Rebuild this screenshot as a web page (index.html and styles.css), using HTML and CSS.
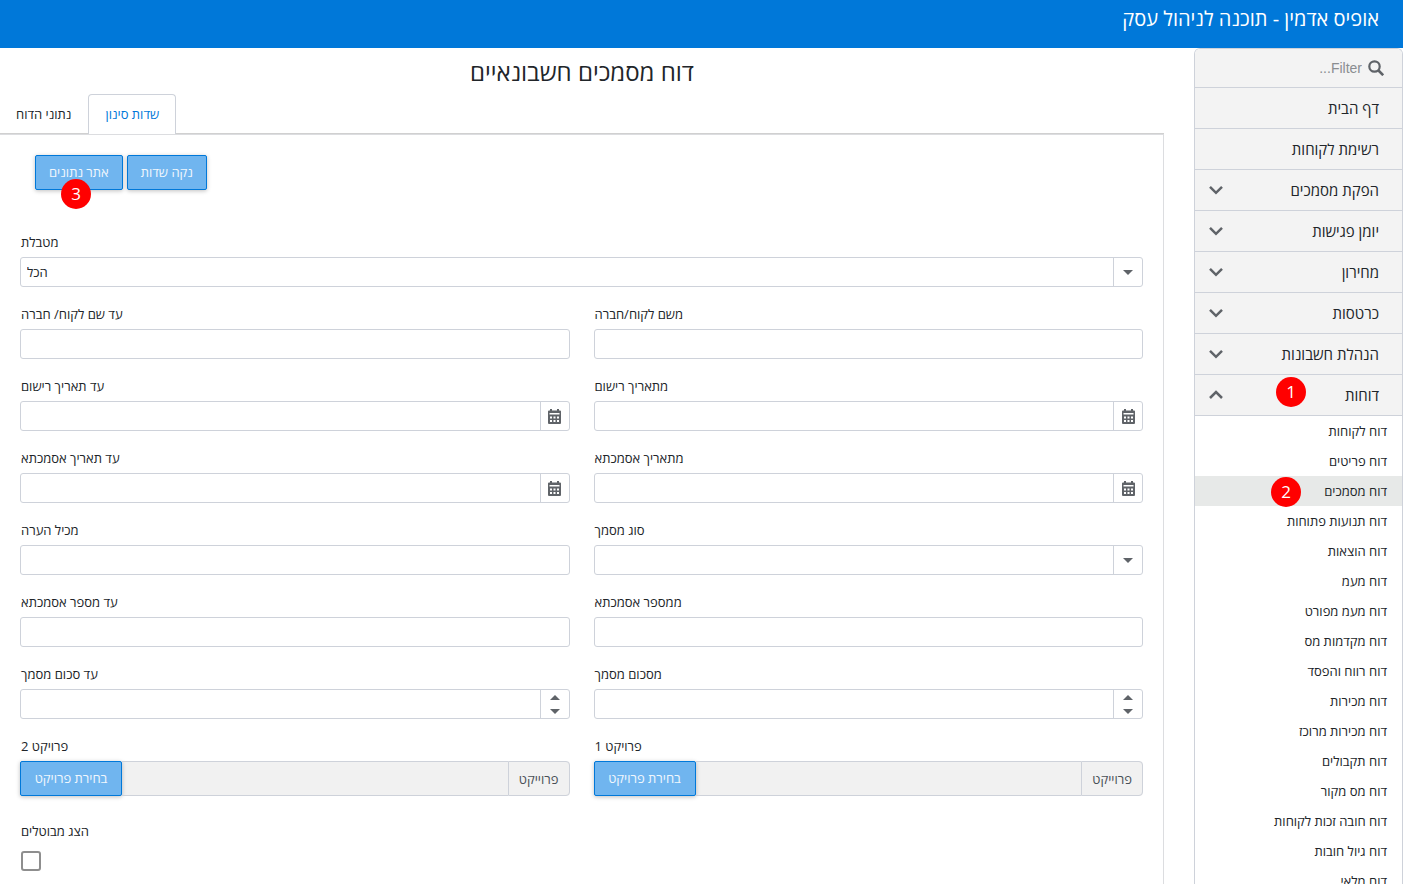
FILE: index.html
```html
<!DOCTYPE html>
<html lang="he">
<head>
<meta charset="utf-8">
<title>אופיס אדמין - תוכנה לניהול עסק</title>
<link rel="stylesheet" href="styles.css">
</head>
<body>
<svg class="sprite" aria-hidden="true">
  <symbol id="i-down" viewBox="0 0 16 16"><path d="M2 4.800 8 10.800 14 4.800" fill="none" stroke="currentColor" stroke-width="2.500"/></symbol>
  <symbol id="i-up" viewBox="0 0 16 16"><path d="M2 11 8 5 14 11" fill="none" stroke="currentColor" stroke-width="2.500"/></symbol>
  <symbol id="i-search" viewBox="0 0 16 16"><circle cx="6.500" cy="6.500" r="5.200" fill="none" stroke="currentColor" stroke-width="2.200"/><path d="M10 10 15.200 15.200" stroke="currentColor" stroke-width="2.600"/></symbol>
  <symbol id="i-caret" viewBox="0 0 10 5"><path d="M0 0h10L5 5z" fill="currentColor"/></symbol>
  <symbol id="i-caret-up" viewBox="0 0 10 5"><path d="M0 5h10L5 0z" fill="currentColor"/></symbol>
  <symbol id="i-cal" viewBox="0 0 13 15"><path fill="currentColor" fill-rule="evenodd" d="M2 0h2v1.500h5V0h2v1.500h1a1 1 0 0 1 1 1V14a1 1 0 0 1-1 1H1a1 1 0 0 1-1-1V2.500a1 1 0 0 1 1-1h1zM1.500 4v1.500h10V4zM2 7.500v2h2v-2zm3.500 0v2h2v-2zm3.500 0v2h2v-2zM2 11v2h2v-2zm3.500 0v2h2v-2zm3.500 0v2h2v-2z"/></symbol>
</svg>
<div class="app">
  <header class="topbar" dir="rtl">אופיס אדמין - תוכנה לניהול עסק</header>
  <div class="layout">
    <main class="content">
      <h1 class="title" dir="rtl">דוח מסמכים חשבונאיים</h1>
      <div class="tabs" role="tablist">
        <button class="tab" role="tab" aria-selected="false" type="button">נתוני הדוח</button>
        <button class="tab tab-active" role="tab" aria-selected="true" type="button">שדות סינון</button>
      </div>
      <form class="panel">
        <div class="toolbar">
          <div class="marked"><button class="btn" type="button">אתר נתונים</button><span class="badge badge-below">3</span></div>
          <button class="btn" type="button">נקה שדות</button>
        </div>
        <div class="fields">
          <div class="field field-wide"><label for="table">מטבלת</label>
            <div class="control"><select id="table"><option>הכל</option></select><span class="addon"><svg class="caret"><use href="#i-caret"/></svg></span></div></div>

          <div class="field"><label for="name-to">עד שם לקוח/ חברה</label><div class="control"><input id="name-to" type="text"></div></div>
          <div class="field"><label for="name-from">משם לקוח/חברה</label><div class="control"><input id="name-from" type="text"></div></div>

          <div class="field"><label for="reg-to">עד תאריך רישום</label><div class="control"><input id="reg-to" type="text"><button class="addon" type="button" aria-label="לוח שנה"><svg class="cal"><use href="#i-cal"/></svg></button></div></div>
          <div class="field"><label for="reg-from">מתאריך רישום</label><div class="control"><input id="reg-from" type="text"><button class="addon" type="button" aria-label="לוח שנה"><svg class="cal"><use href="#i-cal"/></svg></button></div></div>

          <div class="field"><label for="ref-to">עד תאריך אסמכתא</label><div class="control"><input id="ref-to" type="text"><button class="addon" type="button" aria-label="לוח שנה"><svg class="cal"><use href="#i-cal"/></svg></button></div></div>
          <div class="field"><label for="ref-from">מתאריך אסמכתא</label><div class="control"><input id="ref-from" type="text"><button class="addon" type="button" aria-label="לוח שנה"><svg class="cal"><use href="#i-cal"/></svg></button></div></div>

          <div class="field"><label for="note">מכיל הערה</label><div class="control"><input id="note" type="text"></div></div>
          <div class="field"><label for="doc-type">סוג מסמך</label><div class="control"><select id="doc-type"><option></option></select><span class="addon"><svg class="caret"><use href="#i-caret"/></svg></span></div></div>

          <div class="field"><label for="num-to">עד מספר אסמכתא</label><div class="control"><input id="num-to" type="text"></div></div>
          <div class="field"><label for="num-from">ממספר אסמכתא</label><div class="control"><input id="num-from" type="text"></div></div>

          <div class="field"><label for="sum-to">עד סכום מסמך</label><div class="control"><input id="sum-to" type="text" inputmode="decimal"><div class="addon spin"><button type="button" aria-label="הגדל"><svg class="caret"><use href="#i-caret-up"/></svg></button><button type="button" aria-label="הקטן"><svg class="caret"><use href="#i-caret"/></svg></button></div></div></div>
          <div class="field"><label for="sum-from">מסכום מסמך</label><div class="control"><input id="sum-from" type="text" inputmode="decimal"><div class="addon spin"><button type="button" aria-label="הגדל"><svg class="caret"><use href="#i-caret-up"/></svg></button><button type="button" aria-label="הקטן"><svg class="caret"><use href="#i-caret"/></svg></button></div></div></div>

          <div class="field"><label for="project-2" dir="rtl">פרויקט 2</label><div class="picker"><button class="btn" type="button">בחירת פרויקט</button><input id="project-2" type="text" readonly><span class="picker-tag">פרוייקט</span></div></div>
          <div class="field"><label for="project-1" dir="rtl">פרויקט 1</label><div class="picker"><button class="btn" type="button">בחירת פרויקט</button><input id="project-1" type="text" readonly><span class="picker-tag">פרוייקט</span></div></div>
        </div>
        <div class="check-field"><label for="cancelled">הצג מבוטלים</label><input class="check" id="cancelled" type="checkbox"></div>
      </form>
    </main>
    <nav class="sidebar" dir="rtl">
      <label class="filter"><svg class="icon"><use href="#i-search"/></svg><input type="text" placeholder="Filter..." aria-label="Filter"></label>
      <a class="item" href="#">דף הבית</a>
      <a class="item" href="#">רשימת לקוחות</a>
      <a class="item" href="#">הפקת מסמכים<svg class="icon"><use href="#i-down"/></svg></a>
      <a class="item" href="#">יומן פגישות<svg class="icon"><use href="#i-down"/></svg></a>
      <a class="item" href="#">מחירון<svg class="icon"><use href="#i-down"/></svg></a>
      <a class="item" href="#">כרטסות<svg class="icon"><use href="#i-down"/></svg></a>
      <a class="item" href="#">הנהלת חשבונות<svg class="icon"><use href="#i-down"/></svg></a>
      <a class="item" href="#">דוחות<svg class="icon"><use href="#i-up"/></svg><span class="badge badge-item">1</span></a>
      <div class="submenu">
        <a href="#">דוח לקוחות</a>
        <a href="#">דוח פריטים</a>
        <a class="current" href="#">דוח מסמכים<span class="badge badge-sub">2</span></a>
        <a href="#">דוח תנועות פתוחות</a>
        <a href="#">דוח הוצאות</a>
        <a href="#">דוח מעמ</a>
        <a href="#">דוח מעמ מפורט</a>
        <a href="#">דוח מקדמות מס</a>
        <a href="#">דוח רווח והפסד</a>
        <a href="#">דוח מכירות</a>
        <a href="#">דוח מכירות מרוכז</a>
        <a href="#">דוח תקבולים</a>
        <a href="#">דוח מס מקור</a>
        <a href="#">דוח חובה זכות לקוחות</a>
        <a href="#">דוח גיול חובות</a>
        <a href="#">דוח מלאי</a>
      </div>
    </nav>
  </div>
</div>
</body>
</html>
```
FILE: styles.css
```css
:root {
  --blue: #0078d9;
  --line: #ced2da;
  --ink: #212529;
  --icon: #5f6368;
  --grey: #f3f3f3;
}
* { box-sizing: border-box; }
body {
  margin: 0;
  background: #fff;
  color: var(--ink);
  font: 13px/20px "Open Sans", "Liberation Sans", sans-serif;
}
button, input, select { font: inherit; color: inherit; }
button { cursor: pointer; }
a { color: inherit; text-decoration: none; }
.sprite { position: absolute; width: 0; height: 0; }

.app {
  display: flex;
  flex-direction: column;
  height: 100vh;
  margin-right: 2px;
  overflow: hidden;
}
.topbar {
  flex: none;
  padding: 0 24px 10px;
  background: var(--blue);
  color: #fff;
  font-size: 20px;
  font-weight: 500;
  line-height: 38px;
}
.layout { display: flex; flex: 1; gap: 30px; min-height: 0; }

.content { display: flex; flex: 1; flex-direction: column; min-width: 0; }
.title {
  margin: 8px 0 6px;
  font-size: 24px;
  font-weight: 400;
  line-height: 32px;
  text-align: center;
}
.tabs { display: flex; border-bottom: 1px solid #d0d0d0; }
.tab {
  height: 40px;
  margin-bottom: -1px;
  padding: 0 16px 2px;
  border: 1px solid transparent;
  border-bottom: 0;
  border-radius: 4px 4px 0 0;
  background: none;
}
.tab:first-child { border-left: 0; }
.tab-active { border-color: var(--line); background: #fff; color: var(--blue); }
.panel {
  flex: 1;
  padding: 20px;
  border: 1px solid #dcdde0;
  border-left: 0;
}

.toolbar { display: flex; gap: 4px; margin: 0 15px 41px; }
.marked { position: relative; }
.btn {
  height: 35px;
  padding: 0 13px 2px;
  border: 1px solid var(--blue);
  border-radius: 2px;
  background: #70b5ef;
  box-shadow: 0 1px 4px rgba(0, 0, 0, .25);
  color: #f0f7fd;
  white-space: nowrap;
}
.badge {
  position: absolute;
  width: 30px;
  height: 30px;
  border-radius: 50%;
  background: #f00;
  color: #fff;
  font: 17px/30px "Open Sans", sans-serif;
  text-align: center;
}
.badge-below { top: 24px; left: 26px; }
.badge-item { top: 2px; right: 96px; }
.badge-sub { top: 1px; right: 101px; }

.fields {
  display: grid;
  grid-template-columns: 1fr 1fr;
  gap: 16px 24px;
}
.field { display: flex; flex-direction: column; gap: 4px; min-width: 0; }
.field label, .check-field label { align-self: flex-start; padding: 0 1px; line-height: 22px; }
.field-wide { grid-column: 1 / -1; }
.control {
  display: flex;
  height: 30px;
  border: 1px solid var(--line);
  border-radius: 3px;
}
.control input, .control select {
  flex: 1;
  min-width: 0;
  padding: 0 6px;
  border: 0;
  background: none;
  appearance: none;
}
.addon {
  display: flex;
  flex: none;
  align-items: center;
  justify-content: center;
  width: 29px;
  padding: 0;
  border: 0;
  border-left: 1px solid var(--line);
  background: none;
  color: var(--icon);
}
.caret { width: 10px; height: 5px; }
.cal { width: 13px; height: 15px; }
.spin { flex-direction: column; }
.spin button {
  display: flex;
  flex: 1;
  align-items: center;
  justify-content: center;
  width: 100%;
  padding: 0;
  border: 0;
  background: none;
  color: inherit;
}
.picker {
  display: flex;
  height: 35px;
  border-radius: 4px;
  background: #f1f1f1;
}
.picker .btn { min-width: 102px; }
.picker input {
  flex: 1;
  min-width: 0;
  padding: 0 8px;
  border: 1px solid var(--line);
  border-width: 1px 0;
  background: none;
}
.picker-tag {
  padding: 0 10px;
  border: 1px solid var(--line);
  border-radius: 0 4px 4px 0;
  color: #495057;
  line-height: 34px;
}
.check-field { display: flex; flex-direction: column; gap: 9px; margin-top: 24px; }
.check {
  width: 20px;
  height: 20px;
  margin: 0 1px;
  border: 2px solid #8e8e8e;
  border-radius: 3px;
  background: #fff;
  appearance: none;
}
.check:checked { background: var(--blue); }

.sidebar {
  flex: none;
  width: 209px;
  border: 1px solid var(--line);
  border-bottom: 0;
  border-radius: 6px 6px 0 0;
  overflow: hidden auto;
  scrollbar-width: none;
}
.icon { flex: none; width: 16px; height: 16px; color: var(--icon); }
.filter {
  display: flex;
  align-items: center;
  gap: 6px;
  height: 39px;
  padding: 0 18px;
  border-bottom: 1px solid var(--line);
  background: var(--grey);
}
.filter input {
  flex: 1;
  min-width: 0;
  padding: 0;
  border: 0;
  background: none;
  font: 14px/20px "Liberation Sans", sans-serif;
}
.filter input::placeholder { color: #8a8d91; }
.item {
  position: relative;
  display: flex;
  align-items: center;
  justify-content: space-between;
  height: 41px;
  padding: 0 23px 0 13px;
  border-bottom: 1px solid var(--line);
  background: var(--grey);
  font-size: 15px;
}
.submenu a {
  position: relative;
  display: block;
  padding: 0 15px;
  line-height: 30px;
}
.submenu .current { background: #e7e9e8; }
```
